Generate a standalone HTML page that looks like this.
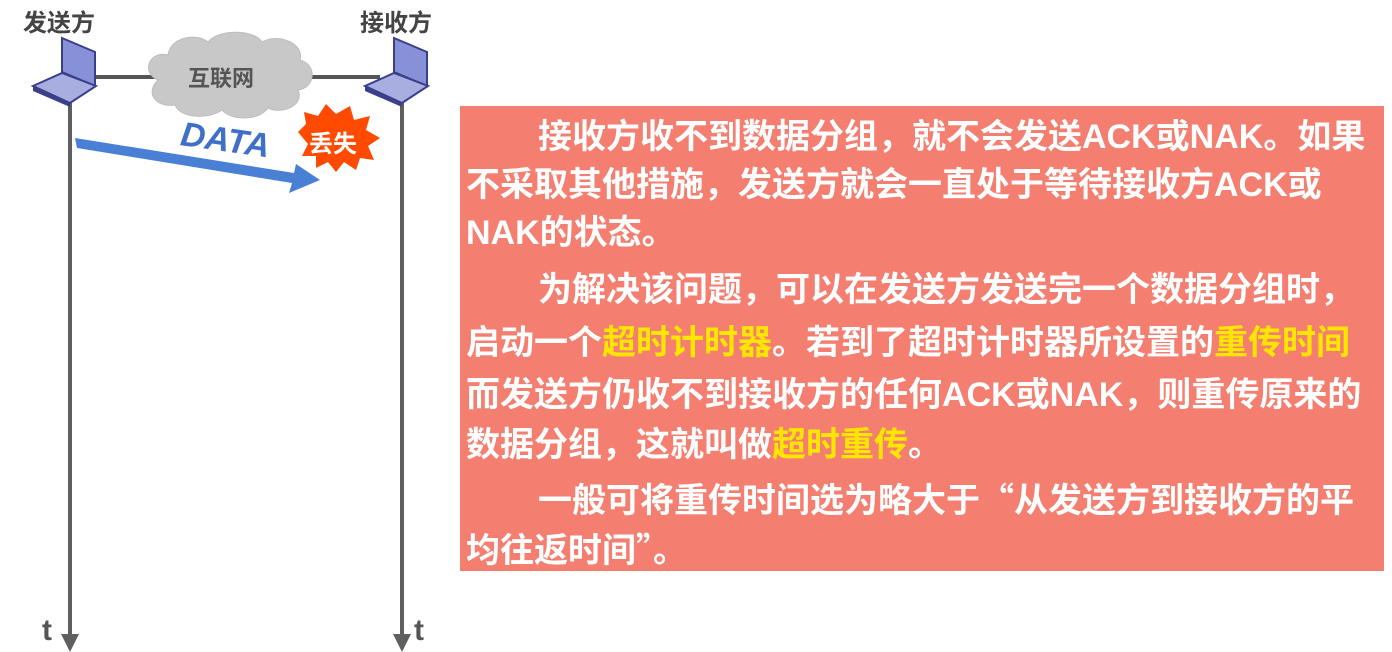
<!DOCTYPE html>
<html><head><meta charset="utf-8"><style>
body{margin:0;width:1392px;height:652px;background:#fff;position:relative;overflow:hidden;font-family:"Liberation Sans","Noto Sans CJK SC",sans-serif}
.box{position:absolute;left:460px;top:106px;width:924px;height:465px;background:#f47e6f}
.l{position:absolute;left:466px;color:#fff;font-size:34px;font-weight:bold;white-space:nowrap;line-height:40px}
.y{color:#ffe600}
.q{font-family:"Noto Sans CJK SC",sans-serif}
.lab{position:absolute;font-size:24px;font-weight:bold;color:#444;font-family:"Noto Sans CJK SC",sans-serif;line-height:30px}
</style></head><body>
<svg width="460" height="652" style="position:absolute;left:0;top:0">
<line x1="70" y1="100" x2="70" y2="636" stroke="#5f5f5f" stroke-width="4"/>
<line x1="402" y1="100" x2="402" y2="636" stroke="#5f5f5f" stroke-width="4"/>
<polygon points="61,634 79,634 70,652" fill="#5f5f5f"/>
<polygon points="393,634 411,634 402,652" fill="#5f5f5f"/>
<line x1="90" y1="77" x2="380" y2="77" stroke="#555" stroke-width="4"/>
<path d="M158,80 C140,72 150,50 168,55 C170,38 195,32 208,42 C220,28 255,30 262,42 C280,32 305,45 300,60 C318,65 315,88 298,90 C305,105 282,115 268,108 C258,122 230,120 222,110 C208,120 180,118 175,105 C155,108 145,92 158,80Z" fill="#c8c8c8" stroke="#bdbdbd"/>
<g>
<polygon points="62,38 95,52 95,86 62,72" fill="#8890d8" stroke="#3a3f8a" stroke-width="2"/>
<polygon points="33,86 62,73 96,86 70,103" fill="#a9aee0" stroke="#3a3f8a" stroke-width="2"/>
<polygon points="33,86 70,103 70,107 33,91" fill="#3a3f8a"/>
</g>
<g transform="translate(332,0)">
<polygon points="62,38 95,52 95,86 62,72" fill="#8890d8" stroke="#3a3f8a" stroke-width="2"/>
<polygon points="33,86 62,73 96,86 70,103" fill="#a9aee0" stroke="#3a3f8a" stroke-width="2"/>
<polygon points="33,86 70,103 70,107 33,91" fill="#3a3f8a"/>
</g>
<polygon points="75,138 77,148 292,183 289,193 320,180 296,164 294,173" fill="#4a7fd6"/>
<text x="180" y="152" transform="rotate(8 230 145)" font-family="Liberation Sans" font-weight="bold" font-style="italic" font-size="34" fill="#3f6fc8">DATA</text>
<polygon points="298,132 306,124 304,112 318,116 326,104 336,114 350,106 354,120 370,116 366,130 380,138 368,146 374,160 360,158 356,170 344,162 336,172 328,162 316,168 316,156 302,156 308,144" fill="#ff4a00"/>
<text x="309" y="152" font-family="Noto Sans CJK SC" font-weight="bold" font-size="24" fill="#fff">丢失</text>
<text x="42" y="640" font-family="Liberation Sans" font-weight="bold" font-size="30" fill="#555">t</text>
<text x="414" y="640" font-family="Liberation Sans" font-weight="bold" font-size="30" fill="#555">t</text>
</svg>
<div class="lab" style="left:23px;top:6px">发送方</div>
<div class="lab" style="left:360px;top:6px">接收方</div>
<div class="lab" style="left:188px;top:62px;color:#555;font-size:22px">互联网</div>
<div class="box"></div>
<div class="l" style="top:117px;left:538px">接收方收不到数据分组，就不会发送ACK或NAK。如果</div>
<div class="l" style="top:165px">不采取其他措施，发送方就会一直处于等待接收方ACK或</div>
<div class="l" style="top:213px">NAK的状态。</div>
<div class="l" style="top:270px;left:538px">为解决该问题，可以在发送方发送完一个数据分组时，</div>
<div class="l" style="top:323px">启动一个<span class="y">超时计时器</span>。若到了超时计时器所设置的<span class="y">重传时间</span></div>
<div class="l" style="top:375px">而发送方仍收不到接收方的任何ACK或NAK，则重传原来的</div>
<div class="l" style="top:425px">数据分组，这就叫做<span class="y">超时重传</span>。</div>
<div class="l" style="top:478px;left:538px">一般可将重传时间选为略大于<span class="q">“</span>从发送方到接收方的平</div>
<div class="l" style="top:528px">均往返时间<span class="q">”</span>。</div>
</body></html>
